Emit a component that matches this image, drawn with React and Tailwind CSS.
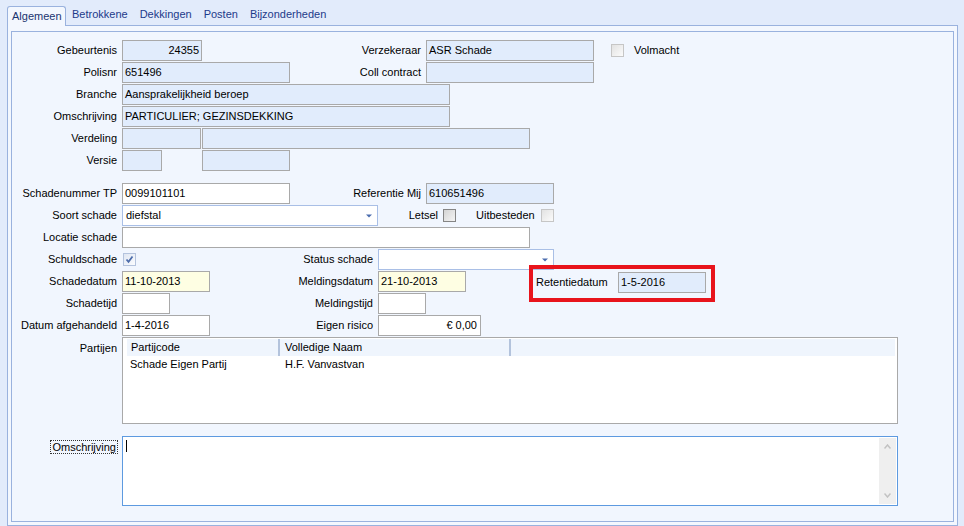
import React from "react";

function Label({ className = "", children }) {
  return (
    <div className={"h-[21px] shrink-0 flex items-center justify-end whitespace-nowrap text-black " + className}>
      {children}
    </div>
  );
}

function Field({ className = "", tone = "blue", children }) {
  const toneCls =
    tone === "blue"
      ? "bg-[#e1ecfc] border-[#a9a9a9]"
      : tone === "yellow"
      ? "bg-[#fefee3] border-[#a9a9a9]"
      : "bg-white border-[#a9a9a9]";
  return (
    <div className={"h-[21px] shrink-0 border flex items-center px-[2px] whitespace-nowrap text-black " + toneCls + " " + className}>
      {children}
    </div>
  );
}

function Select({ className = "", children }) {
  return (
    <div className={"h-[21px] shrink-0 border border-[#a9bfe6] bg-white flex items-center pl-[3px] pr-[5px] whitespace-nowrap " + className}>
      <span className="flex-1">{children}</span>
      <svg width="6" height="4" viewBox="0 0 6 4">
        <path d="M0 0.5 H6 L3 3.5 Z" fill="#4a6cae" />
      </svg>
    </div>
  );
}

function Check({ className = "", kind = "light", checked = false }) {
  const cls =
    kind === "dark"
      ? "border-[#858585] bg-[linear-gradient(135deg,#d4d4d4,#f4f4f4)]"
      : kind === "checked"
      ? "border-[#b4c3dd] bg-[linear-gradient(135deg,#dfe6f2,#fbfcfe)]"
      : "border-[#c6c6c6] bg-[linear-gradient(135deg,#e2e2e2,#fbfbfb)]";
  return (
    <div className={"w-[13px] h-[13px] shrink-0 border relative " + cls + " " + className}>
      {checked && (
        <svg className="absolute left-[1px] top-[1px]" width="9" height="9" viewBox="0 0 9 9">
          <path d="M1.5 4.5 L3.5 6.8 L7.5 1.5" stroke="#4d6dab" strokeWidth="1.8" fill="none" />
        </svg>
      )}
    </div>
  );
}

function Row({ children, className = "" }) {
  return <div className={"flex h-[21px] items-start " + className}>{children}</div>;
}

export default function App() {
  return (
    <div className="w-[964px] h-[526px] bg-[#e2ebfb] overflow-hidden font-['Liberation_Sans',Arial,sans-serif] text-[11px] leading-[13px] text-black">
      {/* Tabs */}
      <div className="h-[25px] flex items-end pl-[7px]">
        <div className="relative z-10 -mb-px h-[20px] w-[59px] border border-b-0 border-[#9ab2de] rounded-t-[3px] bg-[#f3f7fe] pl-[4px] pt-[3px] text-[#1a3470]">
          Algemeen
        </div>
        <div className="px-[6px] pb-[4px] text-[#1d3a8a]">Betrokkene</div>
        <div className="px-[6px] pb-[4px] text-[#1d3a8a]">Dekkingen</div>
        <div className="px-[6px] pb-[4px] text-[#1d3a8a]">Posten</div>
        <div className="px-[6px] pb-[4px] text-[#1d3a8a]">Bijzonderheden</div>
      </div>

      {/* Panel */}
      <div className="ml-[7px] w-[951px] h-[501px] border border-[#9ab2de] bg-[#f3f7fe] px-[3px] pt-[5px] pb-[3px]">
        <div className="h-full border border-[#9ab2de] bg-[#f1f6fe] pt-[8px] flex flex-col">
          {/* Block A */}
          <div className="flex flex-col gap-px">
            <Row>
              <Label className="w-[105px]">Gebeurtenis</Label>
              <Field className="ml-[5px] w-[80px] justify-end">24355</Field>
              <Label className="w-[219px]">Verzekeraar</Label>
              <Field className="ml-[5px] w-[168px]">ASR Schade</Field>
              <div className="h-[21px] flex items-center">
                <Check className="ml-[17px]" />
                <span className="ml-[10px]">Volmacht</span>
              </div>
            </Row>
            <Row>
              <Label className="w-[105px]">Polisnr</Label>
              <Field className="ml-[5px] w-[168px]">651496</Field>
              <Label className="w-[131px]">Coll contract</Label>
              <Field className="ml-[5px] w-[168px]" />
            </Row>
            <Row>
              <Label className="w-[105px]">Branche</Label>
              <Field className="ml-[5px] w-[328px]">Aansprakelijkheid beroep</Field>
            </Row>
            <Row>
              <Label className="w-[105px]">Omschrijving</Label>
              <Field className="ml-[5px] w-[328px]">PARTICULIER; GEZINSDEKKING</Field>
            </Row>
            <Row>
              <Label className="w-[105px]">Verdeling</Label>
              <Field className="ml-[5px] w-[79px]" />
              <Field className="ml-px w-[328px]" />
            </Row>
            <Row>
              <Label className="w-[105px]">Versie</Label>
              <Field className="ml-[5px] w-[40px]" />
              <Field className="ml-[40px] w-[88px]" />
            </Row>
          </div>

          {/* Block B */}
          <div className="mt-[12px] flex flex-col gap-px">
            <Row>
              <Label className="w-[105px]">Schadenummer TP</Label>
              <Field tone="white" className="ml-[5px] w-[168px]">0099101101</Field>
              <Label className="w-[131px]">Referentie Mij</Label>
              <Field className="ml-[5px] w-[128px]">610651496</Field>
            </Row>
            <Row>
              <Label className="w-[105px]">Soort schade</Label>
              <Select className="ml-[5px] w-[256px]">diefstal</Select>
              <Label className="w-[60px]">Letsel</Label>
              <div className="h-[21px] flex items-center">
                <Check kind="dark" className="ml-[5px]" />
                <span className="ml-[20px]">Uitbesteden</span>
                <Check className="ml-[6px]" />
              </div>
            </Row>
            <Row>
              <Label className="w-[105px]">Locatie schade</Label>
              <Field tone="white" className="ml-[5px] w-[408px]" />
            </Row>
            <Row>
              <Label className="w-[105px]">Schuldschade</Label>
              <div className="h-[21px] flex items-center">
                <Check kind="checked" checked className="ml-[6px]" />
              </div>
              <Label className="w-[237px]">Status schade</Label>
              <Select className="ml-[5px] w-[176px]" />
            </Row>
            <Row>
              <Label className="w-[105px]">Schadedatum</Label>
              <Field tone="yellow" className="ml-[5px] w-[88px]">11-10-2013</Field>
              <Label className="w-[163px]">Meldingsdatum</Label>
              <Field tone="yellow" className="ml-[5px] w-[88px]">21-10-2013</Field>
              <div className="ml-[63px] -mt-[6px] w-[186px] h-[37px] shrink-0 border-[4px] border-[#e8141c] pt-[3px] pl-[3px]">
                <div className="flex h-[21px] items-center">
                  <span className="w-[82px] shrink-0">Retentiedatum</span>
                  <Field className="w-[88px]">1-5-2016</Field>
                </div>
              </div>
            </Row>
            <Row>
              <Label className="w-[105px]">Schadetijd</Label>
              <Field tone="white" className="ml-[5px] w-[48px]" />
              <Label className="w-[203px]">Meldingstijd</Label>
              <Field tone="white" className="ml-[5px] w-[48px]" />
            </Row>
            <Row>
              <Label className="w-[105px]">Datum afgehandeld</Label>
              <Field tone="white" className="ml-[5px] w-[88px]">1-4-2016</Field>
              <Label className="w-[163px]">Eigen risico</Label>
              <Field tone="white" className="ml-[5px] w-[103px] justify-end pr-[3px]">€ 0,00</Field>
            </Row>
            <div className="flex">
              <div className="w-[105px] shrink-0 text-right pt-[5px]">Partijen</div>
              <div className="ml-[5px] w-[776px] h-[87px] border border-[#a9a9a9] bg-white pt-px pl-[4px] pr-[2px]">
                <div className="h-[17px] bg-[#eff5fd] flex">
                  <div className="w-[153px] h-full flex items-center pl-[4px] border-r-2 border-[#b3c3dc]">Partijcode</div>
                  <div className="w-[231px] h-full flex items-center pl-[5px] border-r-2 border-[#b3c3dc]">Volledige Naam</div>
                </div>
                <div className="flex h-[17px] items-center">
                  <div className="w-[155px] pl-[3px]">Schade Eigen Partij</div>
                  <div className="pl-[3px]">H.F. Vanvastvan</div>
                </div>
              </div>
            </div>
          </div>

          {/* Omschrijving */}
          <div className="mt-[12px] flex items-start">
            <div className="w-[106px] shrink-0 flex items-start justify-end pt-[4px]">
              <span className="block border border-dotted border-[#333] px-px leading-[12px]">Omschrijving</span>
            </div>
            <div className="ml-[4px] w-[776px] h-[70px] border border-[#5d9ae0] bg-white flex">
              <div className="flex-1 pl-[3px] pt-[3px]">
                <div className="w-px h-[12px] bg-black" />
              </div>
              <div className="w-[17px] mt-px mr-px mb-px bg-[#efefef] flex flex-col items-center justify-between py-[6px]">
                <svg width="7" height="5" viewBox="0 0 7 5">
                  <path d="M0.5 4.5 L3.5 1 L6.5 4.5" stroke="#c2c2c2" strokeWidth="1.5" fill="none" />
                </svg>
                <svg width="7" height="5" viewBox="0 0 7 5">
                  <path d="M0.5 0.5 L3.5 4 L6.5 0.5" stroke="#c2c2c2" strokeWidth="1.5" fill="none" />
                </svg>
              </div>
            </div>
          </div>
        </div>
      </div>
    </div>
  );
}
